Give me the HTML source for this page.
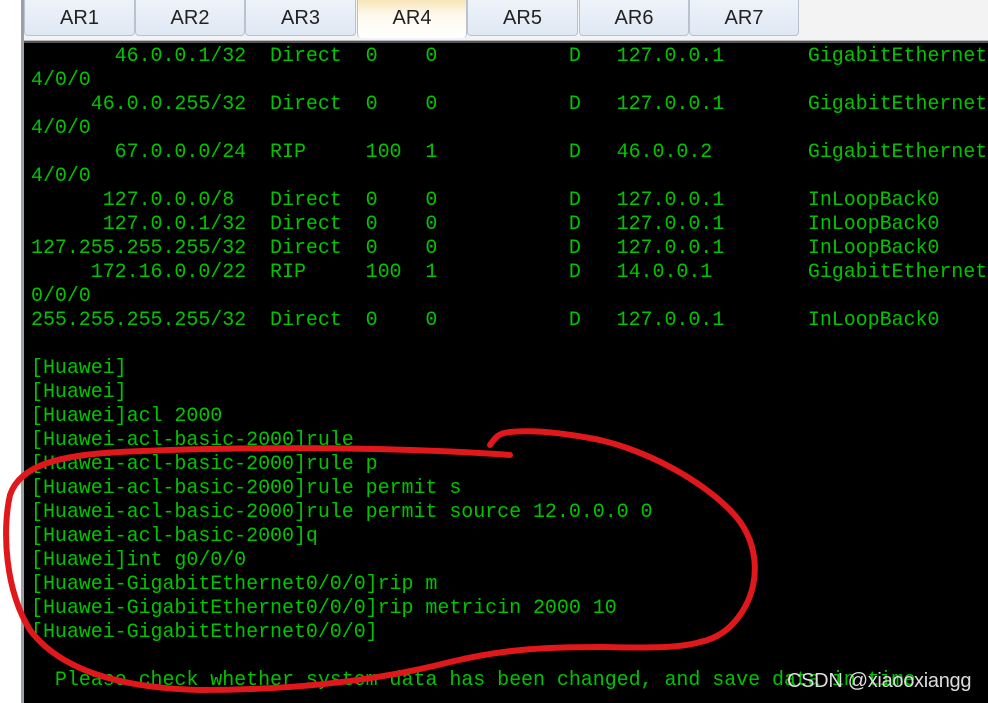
<!DOCTYPE html>
<html><head><meta charset="utf-8"><style>
html,body{margin:0;padding:0;width:988px;height:703px;overflow:hidden;background:#fff;position:relative}
.left{position:absolute;left:0;top:0;width:22px;height:703px;background:#fff}
.lb{position:absolute;left:21px;top:0;width:3px;height:703px;background:#9aa0a8}
.bar{position:absolute;left:24px;top:0;width:964px;height:40px;background:#f3f3f3;border-bottom:1px solid #b8bcc2}
.tab{position:absolute;top:0;height:35px;background:linear-gradient(#eef3fa,#dfe8f4);border:1px solid #b9c3cf;border-top:none;border-radius:0 0 4px 4px;font:20px "Liberation Sans",sans-serif;color:#222;text-align:center;line-height:36px}
.tab.act{background:linear-gradient(#f7e6b8,#fdf9ee 40%,#fff);height:38px;border-bottom:none}
.term{position:absolute;left:24px;top:41px;width:964px;height:662px;background:#000;border-top:2px solid #555}
pre{position:absolute;left:31px;top:45px;margin:0;font:20px/24px "Liberation Mono",monospace;color:#00c400;white-space:pre;letter-spacing:-0.05px}
.wm{position:absolute;left:787px;top:670px;font:20px "Liberation Sans",sans-serif;color:#ddd;letter-spacing:-0.3px}
svg{position:absolute;left:0;top:0}
</style></head><body>
<div class="left"></div><div class="lb"></div>
<div class="bar"></div>
<div class="tab" style="left:24px;width:109px">AR1</div>
<div class="tab" style="left:135px;width:108px">AR2</div>
<div class="tab" style="left:245px;width:109px">AR3</div>
<div class="tab act" style="left:357px;width:108px">AR4</div>
<div class="tab" style="left:467px;width:109px">AR5</div>
<div class="tab" style="left:579px;width:108px">AR6</div>
<div class="tab" style="left:689px;width:108px">AR7</div>
<div class="term"></div>
<pre>       46.0.0.1/32  Direct  0    0           D   127.0.0.1       GigabitEthernet
4/0/0
     46.0.0.255/32  Direct  0    0           D   127.0.0.1       GigabitEthernet
4/0/0
       67.0.0.0/24  RIP     100  1           D   46.0.0.2        GigabitEthernet
4/0/0
      127.0.0.0/8   Direct  0    0           D   127.0.0.1       InLoopBack0
      127.0.0.1/32  Direct  0    0           D   127.0.0.1       InLoopBack0
127.255.255.255/32  Direct  0    0           D   127.0.0.1       InLoopBack0
     172.16.0.0/22  RIP     100  1           D   14.0.0.1        GigabitEthernet
0/0/0
255.255.255.255/32  Direct  0    0           D   127.0.0.1       InLoopBack0

[Huawei]
[Huawei]
[Huawei]acl 2000
[Huawei-acl-basic-2000]rule
[Huawei-acl-basic-2000]rule p
[Huawei-acl-basic-2000]rule permit s
[Huawei-acl-basic-2000]rule permit source 12.0.0.0 0
[Huawei-acl-basic-2000]q
[Huawei]int g0/0/0
[Huawei-GigabitEthernet0/0/0]rip m
[Huawei-GigabitEthernet0/0/0]rip metricin 2000 10
[Huawei-GigabitEthernet0/0/0]

  Please check whether system data has been changed, and save data in time</pre>
<svg width="988" height="703"><path d="M490,445 C495,438 498,433 510,432 C530,430 560,432 600,440 C650,452 700,480 730,510 C760,540 760,580 745,607 C735,625 720,638 700,642 C680,648 650,648 600,647 C540,647 500,650 450,662 C380,680 300,690 200,690 C120,688 60,670 30,630 C5,590 2,530 10,495 C20,465 60,455 120,452 C250,446 400,447 510,455" fill="none" stroke="#e0181c" stroke-width="6" stroke-linecap="round"/></svg>
<div class="wm">CSDN @xiaooxiangg</div>
</body></html>
